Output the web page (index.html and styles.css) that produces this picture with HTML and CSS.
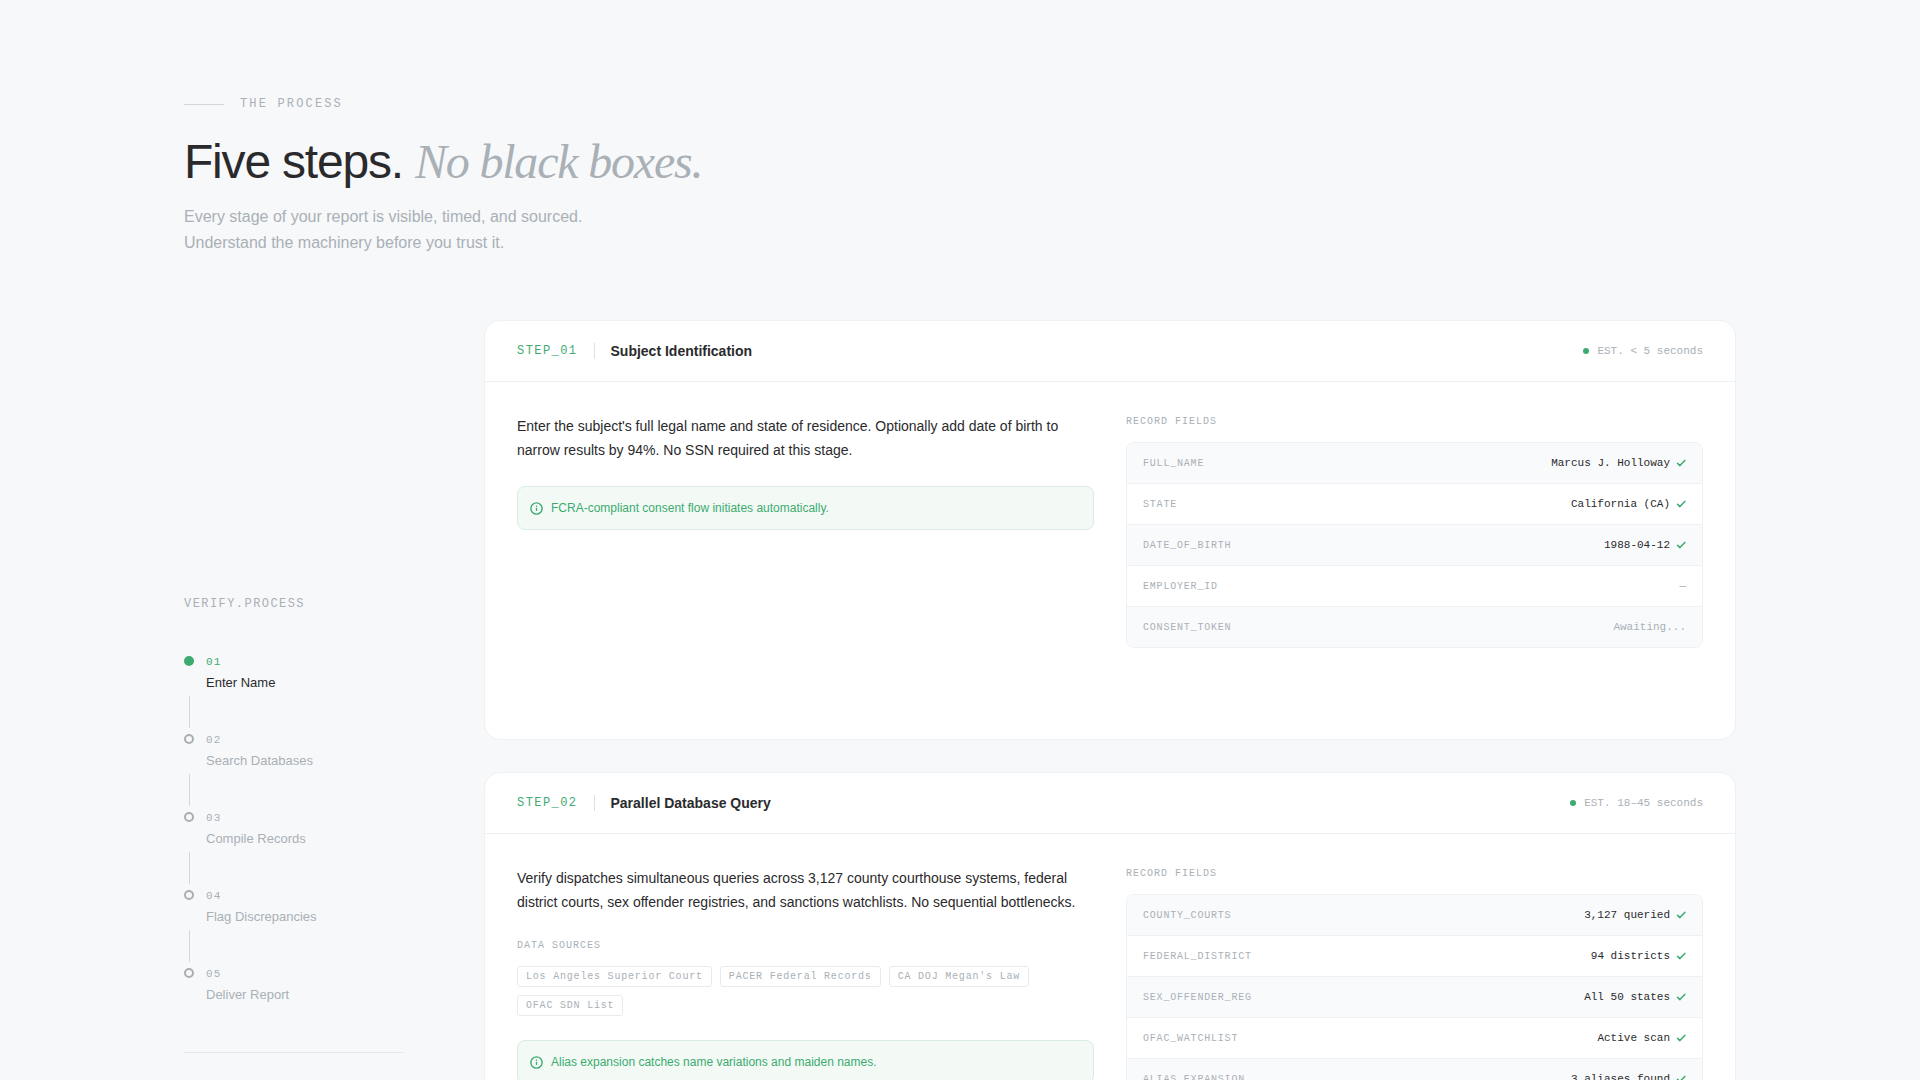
FILE: index.html
```html
<!DOCTYPE html>
<html lang="en">
<head>
  <meta charset="UTF-8">
  <meta name="viewport" content="width=device-width, initial-scale=1">
  <title>Verify - The Process</title>
  <link rel="stylesheet" href="styles.css">
</head>
<body>
  <!-- shared icons -->
  <svg class="sprite" aria-hidden="true">
    <symbol id="info" viewBox="0 0 12 12">
      <circle cx="6" cy="6" r="5.2" fill="none" stroke="currentColor" stroke-width="1.3"/>
      <path d="M6 5.4v3M6 3.2v1.1" fill="none" stroke="currentColor" stroke-width="1.2"/>
    </symbol>
    <symbol id="check" viewBox="0 0 10 10">
      <path d="M1.5 5.2l2.4 2.4L8.8 2.4" fill="none" stroke="currentColor" stroke-width="1.5" stroke-linecap="round" stroke-linejoin="round"/>
    </symbol>
  </svg>

  <main class="process">
    <header class="intro">
      <p class="eyebrow">THE PROCESS</p>
      <h1>Five steps. <em>No black boxes.</em></h1>
      <p class="lead">Every stage of your report is visible, timed, and sourced.<br>Understand the machinery before you trust it.</p>
    </header>

    <div class="layout">
      <aside class="sidebar">
        <p class="sidebar-title">VERIFY.PROCESS</p>
        <ol class="steps">
          <li class="step active">
            <span class="dot"></span>
            <div><span class="num">01</span><span class="name">Enter Name</span></div>
          </li>
          <li class="step">
            <span class="dot"></span>
            <div><span class="num">02</span><span class="name">Search Databases</span></div>
          </li>
          <li class="step">
            <span class="dot"></span>
            <div><span class="num">03</span><span class="name">Compile Records</span></div>
          </li>
          <li class="step">
            <span class="dot"></span>
            <div><span class="num">04</span><span class="name">Flag Discrepancies</span></div>
          </li>
          <li class="step">
            <span class="dot"></span>
            <div><span class="num">05</span><span class="name">Deliver Report</span></div>
          </li>
        </ol>
        <hr class="rule">
      </aside>

      <div class="cards">
        <section class="card">
          <div class="card-head">
            <span class="step-id">STEP_01</span>
            <h2>Subject Identification</h2>
            <span class="est">EST. &lt; 5 seconds</span>
          </div>
          <div class="card-body">
            <div class="about">
              <p class="text">Enter the subject's full legal name and state of residence. Optionally add date of birth to narrow results by 94%. No SSN required at this stage.</p>
              <p class="notice"><svg class="info"><use href="#info"/></svg>FCRA-compliant consent flow initiates automatically.</p>
            </div>
            <div class="record">
              <h3 class="label">RECORD FIELDS</h3>
              <div class="table-wrap">
                <table>
                  <tr><th scope="row">FULL_NAME</th><td>Marcus J. Holloway<svg class="check"><use href="#check"/></svg></td></tr>
                  <tr><th scope="row">STATE</th><td>California (CA)<svg class="check"><use href="#check"/></svg></td></tr>
                  <tr><th scope="row">DATE_OF_BIRTH</th><td>1988-04-12<svg class="check"><use href="#check"/></svg></td></tr>
                  <tr><th scope="row">EMPLOYER_ID</th><td class="pending">—</td></tr>
                  <tr><th scope="row">CONSENT_TOKEN</th><td class="pending">Awaiting...</td></tr>
                </table>
              </div>
            </div>
          </div>
        </section>

        <section class="card">
          <div class="card-head">
            <span class="step-id">STEP_02</span>
            <h2>Parallel Database Query</h2>
            <span class="est">EST. 18–45 seconds</span>
          </div>
          <div class="card-body">
            <div class="about">
              <p class="text">Verify dispatches simultaneous queries across 3,127 county courthouse systems, federal district courts, sex offender registries, and sanctions watchlists. No sequential bottlenecks.</p>
              <div class="sources">
                <h3 class="label">DATA SOURCES</h3>
                <ul class="chips">
                  <li>Los Angeles Superior Court</li>
                  <li>PACER Federal Records</li>
                  <li>CA DOJ Megan's Law</li>
                  <li>OFAC SDN List</li>
                </ul>
              </div>
              <p class="notice"><svg class="info"><use href="#info"/></svg>Alias expansion catches name variations and maiden names.</p>
            </div>
            <div class="record">
              <h3 class="label">RECORD FIELDS</h3>
              <div class="table-wrap">
                <table>
                  <tr><th scope="row">COUNTY_COURTS</th><td>3,127 queried<svg class="check"><use href="#check"/></svg></td></tr>
                  <tr><th scope="row">FEDERAL_DISTRICT</th><td>94 districts<svg class="check"><use href="#check"/></svg></td></tr>
                  <tr><th scope="row">SEX_OFFENDER_REG</th><td>All 50 states<svg class="check"><use href="#check"/></svg></td></tr>
                  <tr><th scope="row">OFAC_WATCHLIST</th><td>Active scan<svg class="check"><use href="#check"/></svg></td></tr>
                  <tr><th scope="row">ALIAS_EXPANSION</th><td>3 aliases found<svg class="check"><use href="#check"/></svg></td></tr>
                </table>
              </div>
            </div>
          </div>
        </section>
      </div>
    </div>
  </main>
</body>
</html>
```
FILE: styles.css
```css
:root {
  --bg: #f7f8fa;
  --ink: #2a2a2c;
  --muted: #a9b0b6;
  --line: #eef0f3;
  --green: #3dab70;
  --mono: "Liberation Mono", "Courier New", monospace;
}

* { box-sizing: border-box; margin: 0; padding: 0; }

body {
  background: var(--bg);
  color: var(--ink);
  font-family: "Liberation Sans", Arial, sans-serif;
}

ol, ul { list-style: none; }

.sprite { display: none; }

.process {
  max-width: 1600px;
  margin: 0 auto;
  padding: 96px 24px;
}

/* intro */
.intro { margin-bottom: 64px; }

.eyebrow {
  display: flex;
  align-items: center;
  gap: 16px;
  font-family: var(--mono);
  font-size: 12px;
  line-height: 16px;
  letter-spacing: 0.18em;
  color: var(--muted);
}
.eyebrow::before {
  content: "";
  width: 40px;
  height: 1px;
  background: #d3d7db;
}

h1 {
  margin: 24px 0 16px;
  font-size: 48px;
  line-height: 52px;
  font-weight: 400;
  letter-spacing: -0.025em;
}
h1 em {
  font-family: "Liberation Serif", "Times New Roman", serif;
  color: var(--muted);
}

.lead {
  font-size: 16px;
  line-height: 26px;
  color: var(--muted);
}

.layout {
  display: grid;
  grid-template-columns: 220px minmax(0, 1fr);
  gap: 80px;
}

/* sidebar */
.sidebar { padding-top: 276px; }

.sidebar-title {
  margin-bottom: 42px;
  font-family: var(--mono);
  font-size: 12px;
  line-height: 16px;
  letter-spacing: 0.12em;
  color: var(--muted);
}

.step {
  display: flex;
  flex-wrap: wrap;
  align-items: flex-start;
  column-gap: 12px;
  color: var(--muted);
}
.step + .step::before {
  content: "";
  width: 1px;
  height: 32px;
  margin: 4px calc(100% - 6px) 4px 5px;
  background: #d3d7db;
}
.dot {
  width: 10px;
  height: 10px;
  margin-top: 2px;
  border: 2px solid #aaaeb2;
  border-radius: 50%;
}
.num, .name { display: block; }
.num {
  margin-bottom: 4px;
  font-family: var(--mono);
  font-size: 11px;
  line-height: 16px;
  letter-spacing: 0.1em;
}
.name {
  font-size: 13px;
  line-height: 18px;
}
.active .dot { background: var(--green); border-color: var(--green); }
.active .num { color: var(--green); }
.active .name { color: var(--ink); }

.rule {
  margin-top: 48px;
  border: 0;
  border-top: 1px solid #e6e8eb;
}

/* cards */
.cards {
  display: grid;
  gap: 32px;
}
.card {
  min-height: 420px;
  background: #fff;
  border: 1px solid var(--line);
  border-radius: 16px;
}

.card-head {
  display: flex;
  align-items: center;
  padding: 20px 32px;
  border-bottom: 1px solid var(--line);
}
.step-id {
  display: flex;
  font-family: var(--mono);
  font-size: 12px;
  line-height: 16px;
  letter-spacing: 0.12em;
  color: var(--green);
}
.step-id::after {
  content: "";
  width: 1px;
  height: 16px;
  margin: 0 16px;
  background: #dde1e4;
}
h2 {
  font-size: 14px;
  line-height: 20px;
}
.est {
  display: flex;
  align-items: center;
  gap: 8px;
  margin-left: auto;
  font-family: var(--mono);
  font-size: 11px;
  color: var(--muted);
}
.est::before {
  content: "";
  width: 6px;
  height: 6px;
  border-radius: 50%;
  background: var(--green);
}

.card-body {
  display: grid;
  grid-template-columns: 1fr 1fr;
  gap: 32px;
  padding: 32px;
}
.text {
  font-size: 14px;
  line-height: 24px;
}

.label {
  margin-bottom: 12px;
  font-family: var(--mono);
  font-size: 10px;
  line-height: 16px;
  font-weight: 400;
  letter-spacing: 0.1em;
  color: var(--muted);
}

.sources { margin-top: 24px; }
.chips {
  display: flex;
  flex-wrap: wrap;
  gap: 8px;
}
.chips li {
  padding: 3px 8px;
  border: 1px solid #e8ebed;
  border-radius: 3px;
  font-family: var(--mono);
  font-size: 10px;
  line-height: 13px;
  letter-spacing: 0.08em;
  color: var(--muted);
}

.notice {
  display: flex;
  align-items: center;
  gap: 8px;
  margin-top: 24px;
  padding: 12px;
  background: #f3faf6;
  border: 1px solid #d8ece1;
  border-radius: 8px;
  font-size: 12px;
  line-height: 18px;
  color: var(--green);
}
.info { width: 13px; height: 13px; }

/* record tables */
.table-wrap {
  border: 1px solid var(--line);
  border-radius: 8px;
  overflow: hidden;
}
table {
  width: 100%;
  border-spacing: 0;
  font-family: var(--mono);
}
th, td {
  height: 41px;
  padding: 0 16px;
  border-bottom: 1px solid var(--line);
}
tr:last-child th, tr:last-child td { height: 40px; border-bottom: 0; }
tr:nth-child(odd) { background: #f9fafc; }
th {
  font-size: 10px;
  font-weight: 400;
  text-align: left;
  letter-spacing: 0.08em;
  color: var(--muted);
}
td {
  font-size: 11px;
  text-align: right;
}
.pending { color: var(--muted); }
.check {
  width: 10px;
  height: 10px;
  margin-left: 6px;
  vertical-align: middle;
  color: var(--green);
}
```
